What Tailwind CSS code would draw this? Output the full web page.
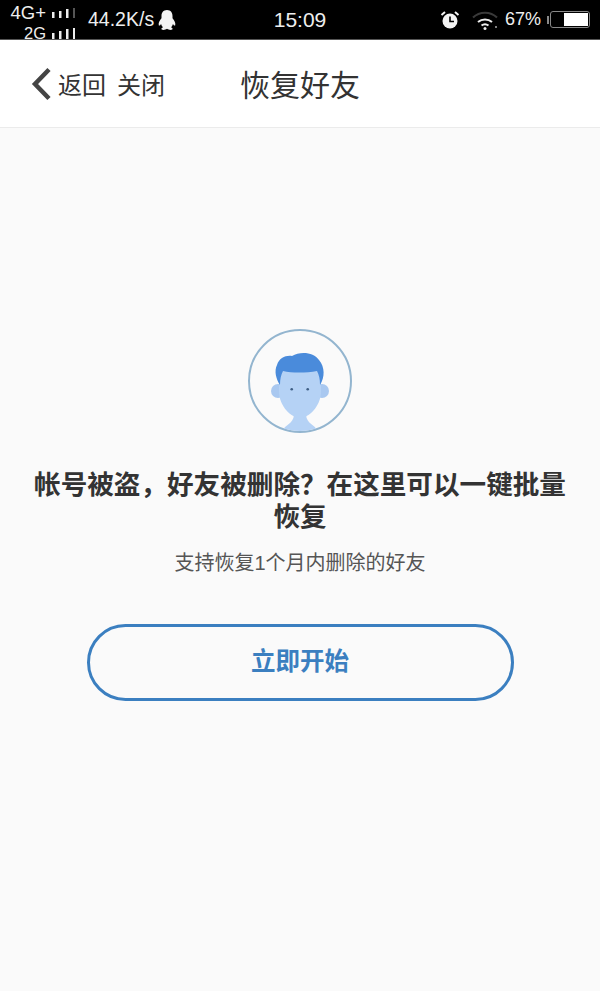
<!DOCTYPE html>
<html lang="zh-CN">
<head>
    <meta charset="UTF-8">
    <meta name="viewport" content="width=device-width, initial-scale=1.0">
    <title>恢复好友</title>
    <script src="https://cdn.jsdelivr.net/npm/@tailwindcss/browser@4"></script>
</head>
<body class="w-[600px] h-[991px] overflow-hidden bg-[#fafafa] font-['Liberation_Sans','Noto_Sans_CJK_SC',sans-serif]">
    <!-- status bar -->
    <div class="h-[40px] bg-black text-[#eeeeee] grid grid-cols-[1fr_auto_1fr] items-center border-b border-[#555555]">
        <div class="flex items-center pl-[10px]">
            <div class="w-[65px] h-[39px] pt-[3px] flex flex-col items-end text-[16.500px] leading-[20px]">
                <div class="flex items-center gap-[6px]">
                    <span class="text-[18.500px]">4G+</span>
                    <svg width="23" height="10" viewBox="0 0 23 10" fill="#eeeeee"><rect x="0" y="4" width="2.500" height="6"/><rect x="7" y="3" width="2.500" height="7"/><rect x="14" y="1" width="2.500" height="9"/><rect x="21" y="0" width="2" height="10" fill="#555555"/></svg>
                </div>
                <div class="flex items-center gap-[6px]">
                    <span>2G</span>
                    <svg width="23" height="11" viewBox="0 0 23 11" fill="#eeeeee"><rect x="0" y="5" width="2.500" height="6"/><rect x="7" y="3" width="2.500" height="8"/><rect x="14" y="1" width="2.500" height="10"/><rect x="21" y="0" width="2.500" height="11"/></svg>
                </div>
            </div>
            <span class="ml-[13px] text-[19.500px]">44.2K/s</span>
            <svg class="ml-[3px]" width="20" height="22" viewBox="0 0 18 20" fill="#f4f4f4"><path d="M9 1C5.500 1 4 3.600 4 6.500V8.500C2.600 10.200 1 12.600 1.500 14.800C2 15.600 3 14.600 3.600 13.600C4 15 4.600 16 5.400 16.600C4 17.200 3.600 18 4.200 18.600C5.400 19.400 7.600 19 9 18C10.400 19 12.600 19.400 13.800 18.600C14.400 18 14 17.200 12.600 16.600C13.400 16 14 15 14.400 13.600C15 14.600 16 15.600 16.500 14.800C17 12.600 15.400 10.200 14 8.500V6.500C14 3.600 12.500 1 9 1Z"/></svg>
        </div>
        <span class="text-[21px]">15:09</span>
        <div class="flex items-center justify-end pr-[10px]">
            <svg width="20" height="20" viewBox="0 0 20 20"><circle cx="10" cy="11" r="7.500" fill="#f4f4f4"/><path d="M10 6.500V11.500H14" fill="none" stroke="#000000" stroke-width="1.600"/><path d="M1.500 5L5 2M18.500 5L15 2" stroke="#f4f4f4" stroke-width="2"/></svg>
            <svg class="ml-[12px]" width="26" height="20" viewBox="0 0 26 20" fill="none"><path d="M1 7.500C7.500 1 18.500 1 25 7.500" stroke="#3a3a3a" stroke-width="2"/><path d="M6 12C10 8.500 16 8.500 20 12" stroke="#eeeeee" stroke-width="2"/><path d="M9.500 15.500C11.500 14 14.500 14 16.500 15.500" stroke="#eeeeee" stroke-width="2"/><circle cx="13" cy="18.500" r="1.500" fill="#eeeeee"/><circle cx="24" cy="17" r="1" fill="#aaaaaa"/></svg>
            <span class="ml-[7px] text-[18px]">67%</span>
            <div class="ml-[6px] w-[2px] h-[8px] bg-[#888888]"></div>
            <div class="ml-[1px] w-[40px] h-[17px] border border-[#888888] rounded-[3px] flex justify-end p-[1px]">
                <div class="w-[24px] bg-white"></div>
            </div>
        </div>
    </div>

    <!-- header -->
    <div class="h-[88px] bg-white border-b border-[#ebebeb] grid grid-cols-[1fr_auto_1fr] items-center text-[#333333]">
        <div class="flex items-center pl-[31px]">
            <svg width="21" height="34" viewBox="0 0 21 34" fill="none"><path d="M18 2.500L4 17L18 31.500" stroke="#444444" stroke-width="4.500"/></svg>
            <span class="ml-[6px] pt-[4px] text-[24px]">返回</span>
            <span class="ml-[11px] pt-[4px] text-[24px]">关闭</span>
        </div>
        <h1 class="pt-[4px] text-[30px] text-[#333333]">恢复好友</h1>
    </div>

    <!-- content -->
    <div class="flex flex-col items-center pt-[201px]">
        <div class="w-[104px] h-[104px] rounded-full border-2 border-[#93b5cf] overflow-hidden">
            <svg width="100" height="100" viewBox="0 0 100 100">
                <path d="M32 100C36 93 43 93 44 84H56C57 93 64 93 68 100Z" fill="#b5d2f5"/>
                <circle cx="28" cy="60" r="7" fill="#a9c8f0"/>
                <circle cx="72" cy="60" r="7" fill="#a9c8f0"/>
                <path d="M29 38H71V60C71 76 58 87 50 87C42 87 29 76 29 60Z" fill="#b5d2f5"/>
                <path d="M30 54C26 48 24 40 27 34C29 27 36 24 42 25C50 20 64 21 69 29C75 36 75 46 70 54C70 48 69 44 67 40C56 42 42 42 33 40C31 44 30 48 30 54Z" fill="#4a8bdb"/>
                <circle cx="41.700" cy="58.300" r="1.300" fill="#3f5f85"/>
                <circle cx="57.700" cy="58.300" r="1.300" fill="#3f5f85"/>
            </svg>
        </div>
        <h2 class="mt-[36px] w-[540px] text-center text-[26.600px] leading-[32px] font-bold text-[#333333]">帐号被盗，好友被删除？在这里可以一键批量恢复</h2>
        <p class="mt-[17px] text-[20px] leading-[26px] text-[#555555]">支持恢复1个月内删除的好友</p>
        <button class="mt-[48px] w-[427px] h-[77px] rounded-full border-[3px] border-[#3b7fc0] text-[24.500px] font-bold text-[#3b7fc0]">立即开始</button>
    </div>
</body>
</html>
